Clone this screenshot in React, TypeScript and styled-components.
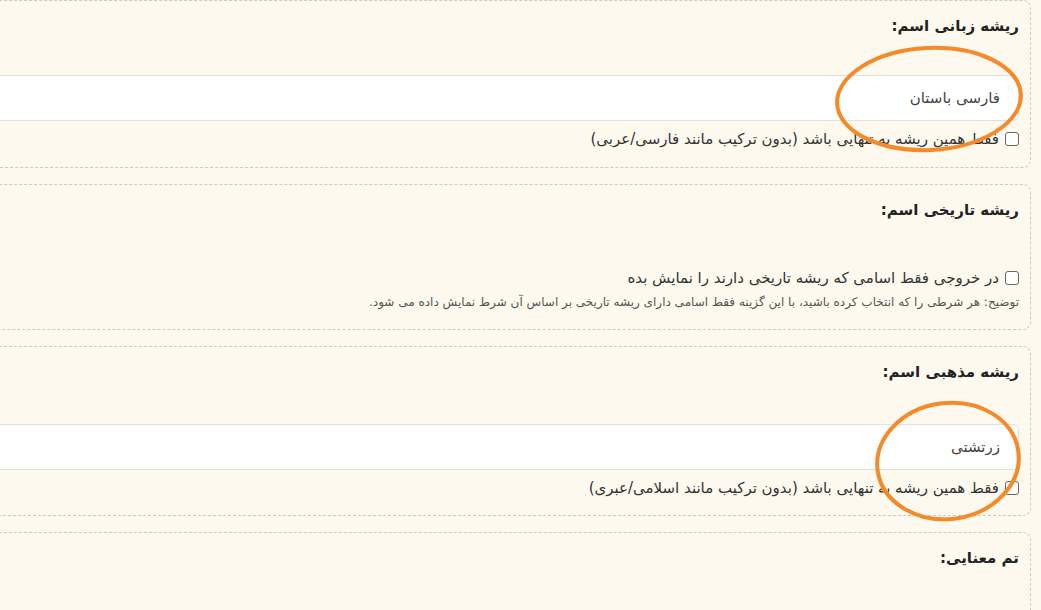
import React from "react";
import styled, { createGlobalStyle } from "styled-components";

const GlobalStyle = createGlobalStyle`
  html, body {
    margin: 0;
    padding: 0;
    background: #fdf9ef;
    overflow: hidden;
  }
  body {
    font-family: "DejaVu Sans", "Noto Sans", sans-serif;
  }
`;

const Page = styled.div`
  position: relative;
  direction: rtl;
  width: 1041px;
  height: 610px;
  overflow: hidden;
  padding-right: 10px;
  box-sizing: border-box;
  display: flex;
  flex-direction: column;
  gap: 16px;
`;

const Card = styled.div<{ $pb?: number }>`
  width: 1300px;
  flex-shrink: 0;
  box-sizing: border-box;
  border: 1px dashed #cfcac0;
  border-radius: 8px;
  background: #fdf9ef;
  padding: 13px 11px ${(p) => p.$pb ?? 18}px;
`;

const Title = styled.div<{ $mb: number }>`
  font-size: 15px;
  font-weight: bold;
  color: #222;
  line-height: 24px;
  margin-bottom: ${(p) => p.$mb}px;
`;

const Input = styled.div`
  height: 46px;
  box-sizing: border-box;
  background: #fff;
  border: 1px solid #e2e0dc;
  border-radius: 6px;
  padding: 0 18px;
  display: flex;
  align-items: center;
  font-size: 15px;
  color: #444;
`;

const CheckRow = styled.label<{ $mt: number }>`
  display: flex;
  align-items: center;
  gap: 6px;
  height: 20px;
  margin-top: ${(p) => p.$mt}px;
  font-size: 15px;
  color: #333;
`;

const Box = styled.span`
  width: 12px;
  height: 12px;
  border: 1px solid #666;
  border-radius: 3px;
  background: #fff;
  flex-shrink: 0;
`;

const Note = styled.div`
  margin-top: 5px;
  line-height: 18px;
  font-size: 12px;
  color: #555;
`;

const Marks = styled.svg`
  position: absolute;
  left: 0;
  top: 0;
  pointer-events: none;
`;

export default function App() {
  return (
    <>
      <GlobalStyle />
      <Page>
        <Card $pb={18}>
          <Title $mb={37}>ریشه زبانی اسم:</Title>
          <Input>فارسی باستان</Input>
          <CheckRow $mt={8}>
            <Box />
            فقط همین ریشه به تنهایی باشد (بدون ترکیب مانند فارسی/عربی)
          </CheckRow>
        </Card>
        <Card $pb={18}>
          <Title $mb={46}>ریشه تاریخی اسم:</Title>
          <CheckRow $mt={0}>
            <Box />
            در خروجی فقط اسامی که ریشه تاریخی دارند را نمایش بده
          </CheckRow>
          <Note>
            توضیح: هر شرطی را که انتخاب کرده باشید، با این گزینه فقط اسامی دارای ریشه تاریخی بر اساس آن شرط نمایش داده می شود.
          </Note>
        </Card>
        <Card $pb={17}>
          <Title $mb={40}>ریشه مذهبی اسم:</Title>
          <Input>زرتشتی</Input>
          <CheckRow $mt={8}>
            <Box />
            فقط همین ریشه به تنهایی باشد (بدون ترکیب مانند اسلامی/عبری)
          </CheckRow>
        </Card>
        <Card>
          <Title $mb={60}>تم معنایی:</Title>
        </Card>
        <Marks width="1041" height="610">
          <ellipse cx="929" cy="99" rx="92" ry="51" fill="none" stroke="#f58a2b" strokeWidth="4" transform="rotate(-3 929 99)" />
          <ellipse cx="948" cy="461" rx="71" ry="58" fill="none" stroke="#f58a2b" strokeWidth="4" transform="rotate(-8 948 461)" />
        </Marks>
      </Page>
    </>
  );
}
